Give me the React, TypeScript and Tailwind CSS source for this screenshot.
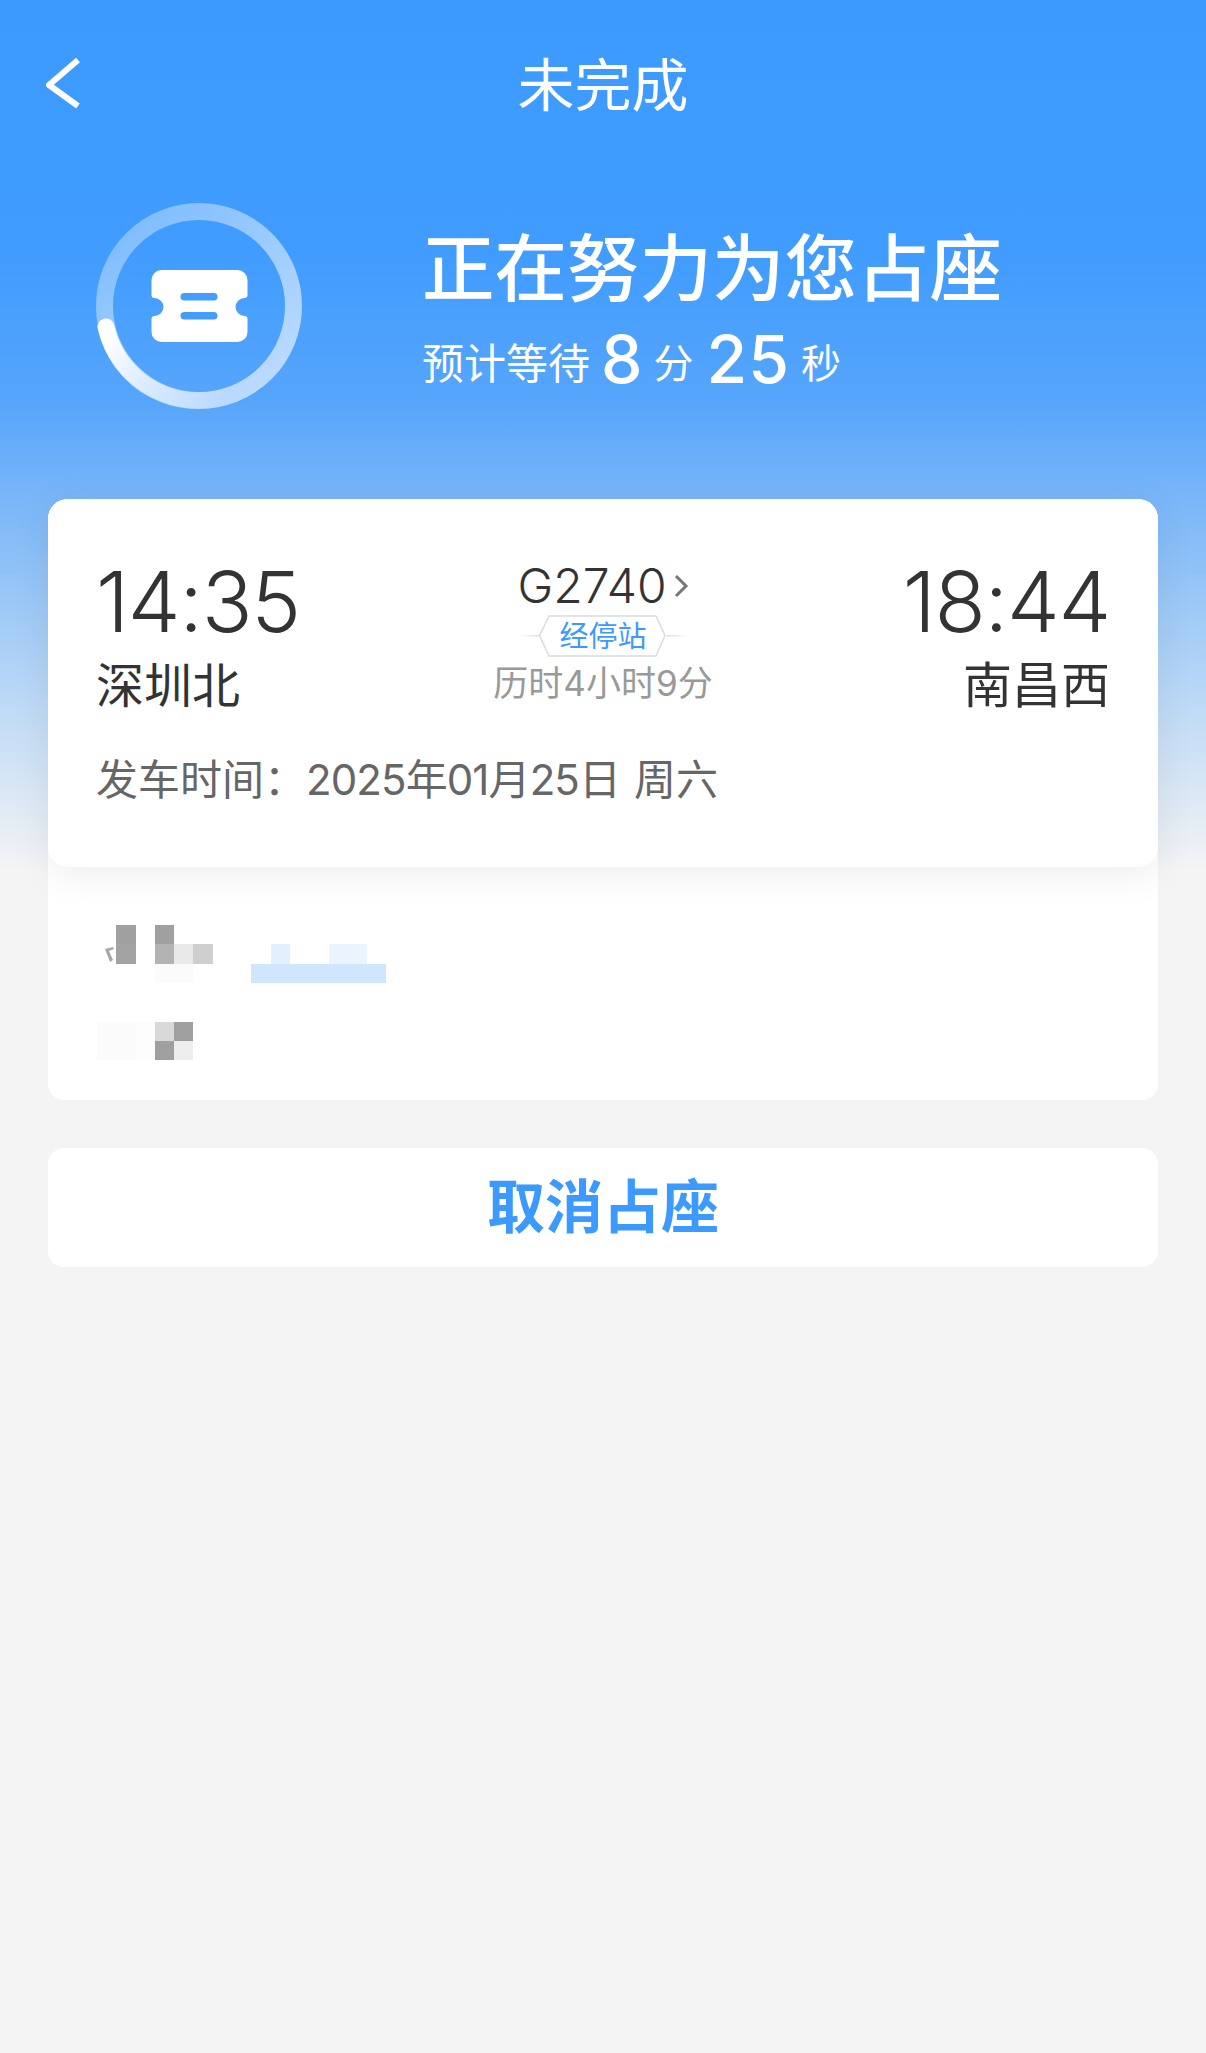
import React from 'react';

const FONT = 'font-["Inter","Noto_Sans_CJK_SC",sans-serif]';

const RingIcon: React.FC = () => (
  <svg width="206" height="206" viewBox="0 0 206 206" fill="none">
    <defs>
      <linearGradient id="track" x1="20" y1="20" x2="180" y2="190" gradientUnits="userSpaceOnUse">
        <stop offset="0" stopColor="#fff" stopOpacity="0.32" />
        <stop offset="0.5" stopColor="#fff" stopOpacity="0.48" />
        <stop offset="1" stopColor="#fff" stopOpacity="0.62" />
      </linearGradient>
      <linearGradient id="progress" x1="15" y1="130" x2="130" y2="200" gradientUnits="userSpaceOnUse">
        <stop offset="0" stopColor="#fff" />
        <stop offset="1" stopColor="#fff" stopOpacity="0" />
      </linearGradient>
    </defs>
    <circle cx="103" cy="103" r="94.5" stroke="url(#track)" strokeWidth="17" />
    <path d="M10 124 A94.5 94.5 0 0 0 135 192" stroke="url(#progress)" strokeWidth="17" strokeLinecap="round" />
    <g transform="translate(3.5 0)">
      <path
        d="M62 67 H138 A10 10 0 0 1 148 77 V92 Q148 95 145 95 A9 9 0 0 0 145 113 Q148 113 148 116 V129 A10 10 0 0 1 138 139 H62 A10 10 0 0 1 52 129 V116 Q52 113 55 113 A9 9 0 0 0 55 95 Q52 95 52 92 V77 A10 10 0 0 1 62 67 Z"
        fill="#fff"
      />
      <rect x="81" y="90" width="37" height="7.5" rx="3.75" fill="#439dfe" />
      <rect x="81" y="109" width="37" height="7.5" rx="3.75" fill="#439dfe" />
    </g>
  </svg>
);

const StopsBadge: React.FC = () => (
  <div className="relative mt-[1px] flex h-[42px] w-[170px] items-center justify-center">
    <svg className="absolute inset-0" width="170" height="42" viewBox="0 0 170 42" fill="none">
      <defs>
        <linearGradient id="lineL" x1="0" y1="0" x2="21" y2="0" gradientUnits="userSpaceOnUse">
          <stop offset="0" stopColor="#ddd" stopOpacity="0" />
          <stop offset="1" stopColor="#ddd" />
        </linearGradient>
        <linearGradient id="lineR" x1="149" y1="0" x2="170" y2="0" gradientUnits="userSpaceOnUse">
          <stop offset="0" stopColor="#ddd" />
          <stop offset="1" stopColor="#ddd" stopOpacity="0" />
        </linearGradient>
      </defs>
      <rect x="0" y="20" width="21" height="1.5" fill="url(#lineL)" />
      <rect x="149" y="20" width="21" height="1.5" fill="url(#lineR)" />
      <path d="M31 1 H138 L147 20.5 L138 41 H31 L21.5 20.5 Z" stroke="#dcdcdc" strokeWidth="1.5" />
    </svg>
    <span className="relative text-[29px] leading-none text-[#3c9aff]">经停站</span>
  </div>
);

// blurred-out passenger rows, 19px squares
const MASK_ROW_1 = [
  ['', 'bg-[#a0a0a0]', '', 'bg-[#a0a0a0]', '', '', '', '', '', '', '', '', '', '', ''],
  ['', 'bg-[#a3a3a3]', '', 'bg-[#b3b3b3]', 'bg-[#e9e9e9]', 'bg-[#cfcfcf]', '', '', '', 'bg-[#e2f0fd]', '', '', 'bg-[#ebf4fe]', 'bg-[#ebf4fe]', ''],
  ['', '', '', 'bg-[#fbfbfb]', 'bg-[#fbfbfb]', '', '', '', 'bg-[#d0e6fd]', 'bg-[#d0e6fd]', 'bg-[#d0e6fd]', 'bg-[#d0e6fd]', 'bg-[#d0e6fd]', 'bg-[#d0e6fd]', 'bg-[#d0e6fd]'],
];

const MASK_ROW_2 = [
  ['bg-[#fbfbfb]', 'bg-[#fbfbfb]', 'bg-[#fdfdfd]', 'bg-[#d9d9d9]', 'bg-[#a0a0a0]'],
  ['bg-[#fbfbfb]', 'bg-[#fbfbfb]', 'bg-[#fdfdfd]', 'bg-[#a0a0a0]', 'bg-[#eeeeee]'],
];

const Mosaic: React.FC<{ rows: string[][] }> = ({ rows }) => (
  <div className="flex flex-col">
    {rows.map((row, i) => (
      <div key={i} className="flex">
        {row.map((cell, j) => (
          <div key={j} className={`h-[19.3px] w-[19.3px] ${cell}`} />
        ))}
      </div>
    ))}
  </div>
);

const App: React.FC = () => {
  return (
    <div className={`min-h-[2053px] w-full bg-[#f4f4f4] bg-[linear-gradient(180deg,#3c9aff_0px,#409cfe_250px,#56a5fb_400px,#7ab6f8_500px,#bcd9f6_700px,#f4f4f4_870px)] ${FONT}`}>
      <header className="relative flex h-[170px] items-center justify-center">
        <svg className="absolute left-[44px] top-[56px]" width="38" height="54" viewBox="0 0 38 54" fill="none">
          <path d="M34 4 L5 29 L34 50" stroke="#fff" strokeWidth="6" strokeLinejoin="round" />
        </svg>
        <h1 className="text-[57px] leading-none text-white">未完成</h1>
      </header>

      <section className="flex h-[329px] items-start pl-[96px] pt-[33px]">
        <RingIcon />
        <div className="ml-[120px] pt-[26px] text-white">
          <h2 className="text-[72.5px] font-medium leading-[80px]">正在努力为您占座</h2>
          <p className="mt-[15px] flex items-center text-[42px] leading-[70px]">
            预计等待
            <span className="mx-[11px] mb-[10px] text-[66px] font-medium">8</span>
            <span className="text-[40px]">分</span>
            <span className="ml-[13px] mr-[11px] mb-[10px] text-[66px] font-medium tracking-[1px]">25</span>
            <span className="text-[40px]">秒</span>
          </p>
        </div>
      </section>

      <div className="px-[48px]">
        <div className="rounded-b-[16px] rounded-t-[20px] bg-white">
          <div className="relative z-10 h-[368px] rounded-[20px] bg-white px-[48px] pt-[61px] shadow-[0_8px_40px_rgba(0,0,0,0.07)]">
            <div className="grid grid-cols-3">
              <div>
                <div className="text-[84px] font-[350] leading-[84px] tracking-[-1.3px] text-[#333]">14:35</div>
                <div className="mt-[10px] text-[48px] leading-[64px] text-[#333]">深圳北</div>
              </div>
              <div className="flex flex-col items-center">
                <div className="relative -mt-[2px] flex items-center text-[48px] font-[350] leading-[56px] text-[#333]">
                  G2740
                  <svg className="ml-[6px]" width="16" height="26" viewBox="0 0 16 26" fill="none">
                    <path d="M3 3 L13 13 L3 23" stroke="#777" strokeWidth="3" />
                  </svg>
                </div>
                <StopsBadge />
                <div className="mt-[3px] text-[35px] leading-[46px] text-[#999]">历时4小时9分</div>
              </div>
              <div className="text-right">
                <div className="text-[84px] font-[350] leading-[84px] tracking-[-1.3px] text-[#333]">18:44</div>
                <div className="mt-[10px] text-[49px] leading-[64px] text-[#333]">南昌西</div>
              </div>
            </div>
            <p className="mt-[32px] text-[42px] leading-[60px] text-[#666]">
              发车时间：
              <span className="tracking-[-0.9px]">2025年01月25日</span>
              <span className="ml-[14px]">周六</span>
            </p>
          </div>

          <div className="relative h-[233px] rounded-b-[16px] bg-white pl-[49px] pt-[58px]">
            <svg className="absolute left-[56px] top-[80px]" width="20" height="24" viewBox="0 0 20 24" fill="none">
              <path d="M1 2 L9 0 L10 2 L5 4 L9 13 L6 15 Z" fill="#a8a8a8" />
            </svg>
            <div className="flex flex-col gap-[39px]">
              <Mosaic rows={MASK_ROW_1} />
              <Mosaic rows={MASK_ROW_2} />
            </div>
          </div>
        </div>

        <button className="mt-[48px] flex h-[119px] w-full items-center justify-center rounded-[16px] bg-white text-[58px] font-semibold text-[#3c9aff]">
          取消占座
        </button>
      </div>
    </div>
  );
};

export default App;
